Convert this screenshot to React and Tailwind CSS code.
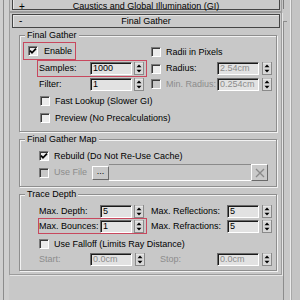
import React from "react";

const Check = ({ checked, disabled }) => (
  <span
    className={`w-[10px] h-[10px] shrink-0 flex items-center justify-center border border-t-[#7a7a7a] border-l-[#7a7a7a] border-b-white border-r-white shadow-[inset_1px_1px_0_#3a3a3a] ${
      disabled ? "bg-[#c8c8c8]" : "bg-[#ececec]"
    }`}
  >
    {checked && (
      <svg width="8" height="8" viewBox="0 0 8 8">
        <path d="M1 3.6 L3 5.8 L7 1.6" fill="none" stroke="#000" strokeWidth="1.7" />
      </svg>
    )}
  </span>
);

const Field = ({ w, value, disabled }) => (
  <span
    className={`${w} h-[13px] shrink-0 flex items-center pl-[2px] border border-t-[#6a6a6a] border-l-[#6a6a6a] border-b-white border-r-white shadow-[inset_1px_1px_0_#1a1a1a] bg-[#e2e2e2] ${
      disabled ? "text-[#8c8c8c]" : "text-black"
    }`}
  >
    {value}
  </span>
);

const Spin = ({ ml }) => (
  <svg width="10" height="13" viewBox="0 0 10 13" className={`shrink-0 ${ml}`}>
    <rect x="0.5" y="0.5" width="9" height="12" fill="#d8d8d8" stroke="#8a8a8a" />
    <line x1="1" y1="1" x2="9" y2="1" stroke="#f4f4f4" />
    <polygon points="2.5,5.2 5,2.6 7.5,5.2" fill="#000" />
    <polygon points="2.5,7.8 5,10.4 7.5,7.8" fill="#000" />
  </svg>
);

const Group = ({ label, className, children }) => (
  <div
    className={`relative ml-[9px] w-[258px] border border-[#8e8e8e] shadow-[inset_1px_1px_0_#f2f2f2,1px_1px_0_#f2f2f2] ${className}`}
  >
    <span className="absolute -top-[5px] left-[5px] px-[2px] bg-[#c8c8c8] leading-none">{label}</span>
    {children}
  </div>
);

const Bar = ({ sign, title, shift }) => (
  <div className="relative ml-[2px] w-[268px] h-[14px] shrink-0 border border-[#454545] bg-[#cacaca] shadow-[inset_1px_1px_0_#e6e6e6] flex items-center justify-center">
    <span className={`absolute left-[6px] text-[10px] leading-none ${shift}`}>{sign}</span>
    <span className={shift}>{title}</span>
  </div>
);

const Red = "border border-[#c8485e]";

export default function App() {
  return (
    <div className="w-[300px] h-[300px] overflow-hidden bg-[#c8c8c8] flex text-[9px] leading-none text-black font-['Liberation_Sans',Arial,sans-serif]">
      {/* left strip */}
      <div className="w-[9px] h-full shrink-0 bg-[#cecece] pl-[3px]">
        <div className="h-full border-l border-[#8c8c8c]" />
      </div>

      {/* middle */}
      <div className="w-[274px] shrink-0 flex flex-col">
        {/* Caustics rollout */}
        <div className="w-[273px] -mt-[6px] border border-[#9c9c9c] pt-px pb-px">
          <Bar sign="+" title="Caustics and Global Illumination (GI)" shift="mt-[7px]" />
        </div>

        {/* Final Gather rollout */}
        <div className="w-[273px] border border-[#9c9c9c] shadow-[1px_1px_0_#e6e6e6] pt-px pb-[3px] flex flex-col">
          <Bar sign="-" title="Final Gather" shift="" />

          {/* Group 1 */}
          <Group label="Final Gather" className="mt-[7px] pt-[6px] pb-[6px] flex flex-col">
            {/* Row A */}
            <div className="h-[18px] flex items-center">
              <div className="w-[131px] flex">
                <div className={`ml-[3px] w-[53px] h-[18px] ${Red} flex items-center pl-[4px] gap-[6px]`}>
                  <Check checked />
                  <span>Enable</span>
                </div>
              </div>
              <div className="flex items-center gap-[5px] mt-[2px]">
                <Check />
                <span>Radii in Pixels</span>
              </div>
            </div>
            {/* Row B */}
            <div className="h-[17px] flex items-center">
              <div className="w-[131px] flex">
                <div className={`ml-[17px] w-[110px] h-[17px] ${Red} flex items-center pl-px`}>
                  <span className="w-[51px]">Samples:</span>
                  <Field w="w-[42px]" value="1000" />
                  <Spin ml="ml-[2px]" />
                </div>
              </div>
              <div className="flex items-center">
                <Check />
                <span className="ml-[5px] w-[51px]">Radius:</span>
                <Field w="w-[42px]" value="2.54cm" disabled />
                <Spin ml="ml-[3px]" />
              </div>
            </div>
            {/* Row C */}
            <div className="h-[14px] flex items-center">
              <div className="w-[131px] flex items-center pl-[19px]">
                <span className="w-[51px]">Filter:</span>
                <Field w="w-[42px]" value="1" />
                <Spin ml="ml-[2px]" />
              </div>
              <div className="flex items-center">
                <Check disabled />
                <span className="ml-[5px] w-[51px] text-[#8c8c8c]">Min. Radius:</span>
                <Field w="w-[42px]" value="0.254cm" disabled />
                <Spin ml="ml-[3px]" />
              </div>
            </div>
            {/* Row D */}
            <div className="h-[14px] mt-[3px] flex items-center pl-[20px] gap-[5px]">
              <Check />
              <span>Fast Lookup (Slower GI)</span>
            </div>
            {/* Row E */}
            <div className="h-[14px] mt-[3px] flex items-center pl-[20px] gap-[5px]">
              <Check />
              <span>Preview (No Precalculations)</span>
            </div>
          </Group>

          {/* Group 2 */}
          <Group label="Final Gather Map" className="mt-[7px] pt-[9px] pb-[5px] flex flex-col">
            <div className="h-[14px] flex items-center pl-[19px] gap-[5px]">
              <Check checked />
              <span>Rebuild (Do Not Re-Use Cache)</span>
            </div>
            <div className="h-[17px] mt-px flex items-center pl-[19px]">
              <Check disabled />
              <span className="ml-[5px] w-[38px] text-[#8c8c8c]">Use File</span>
              <span className="w-[17px] h-[14px] flex items-center justify-center border border-t-white border-l-white border-b-[#6a6a6a] border-r-[#6a6a6a] bg-[#c8c8c8] pb-[3px]">...</span>
              <span className="w-[142px] h-[17px] border-t border-t-[#8a8a8a] border-b border-b-white" />
              <span className="w-[17px] h-[17px] flex items-center justify-center border border-t-white border-l-white border-b-[#6a6a6a] border-r-[#6a6a6a] bg-[#cacaca]">
                <svg width="10" height="10" viewBox="0 0 10 10">
                  <path d="M1 1 L9 9 M9 1 L1 9" stroke="#8a8a8a" strokeWidth="1.3" />
                </svg>
              </span>
            </div>
          </Group>

          {/* Group 3 */}
          <Group label="Trace Depth" className="mt-[7px] pt-[9px] pb-[4px] flex flex-col">
            <div className="h-[14px] flex items-center">
              <div className="w-[131px] flex items-center pl-[19px]">
                <span className="w-[61px]">Max. Depth:</span>
                <Field w="w-[32px]" value="5" />
                <Spin ml="ml-[2px]" />
              </div>
              <div className="flex items-center">
                <span className="w-[76px]">Max. Reflections:</span>
                <Field w="w-[32px]" value="5" />
                <Spin ml="ml-[3px]" />
              </div>
            </div>
            <div className="h-[16px] flex items-center">
              <div className="w-[131px] flex">
                <div className={`ml-[18px] w-[109px] h-[16px] ${Red} flex items-center`}>
                  <span className="w-[61px]">Max. Bounces:</span>
                  <Field w="w-[32px]" value="1" />
                  <Spin ml="ml-[2px]" />
                </div>
              </div>
              <div className="flex items-center">
                <span className="w-[76px]">Max. Refractions:</span>
                <Field w="w-[32px]" value="5" />
                <Spin ml="ml-[3px]" />
              </div>
            </div>
            <div className="h-[14px] mt-[3px] flex items-center pl-[19px] gap-[5px]">
              <Check />
              <span>Use Falloff (Limits Ray Distance)</span>
            </div>
            <div className="h-[13px] mt-[2px] flex items-center">
              <div className="w-[131px] flex items-center pl-[19px]">
                <span className="w-[51px] text-[#8c8c8c]">Start:</span>
                <Field w="w-[42px]" value="0.0cm" disabled />
                <Spin ml="ml-[3px]" />
              </div>
              <div className="flex items-center pl-[9px]">
                <span className="w-[57px] text-[#8c8c8c]">Stop:</span>
                <Field w="w-[42px]" value="0.0cm" disabled />
                <Spin ml="ml-[3px]" />
              </div>
            </div>
          </Group>
        </div>
      </div>

      {/* right strip */}
      <div className="w-[17px] h-full shrink-0 flex">
        <div className="w-px h-full flex flex-col">
          <div className="h-[9px] bg-[#7c7c7c]" />
          <div className="h-[12px]" />
          <div className="flex-1 bg-[#8c8c8c]" />
        </div>
        <div className="w-[6px] h-full flex flex-col">
          <div className="h-[21px]" />
          <div className="h-px w-[3px] bg-[#8c8c8c]" />
        </div>
        <div className="w-px h-full bg-[#ececec]" />
        <div className="w-px h-full bg-[#a8a8a8]" />
        <div className="flex-1 h-full bg-[#c4c4c4]" />
      </div>
    </div>
  );
}
